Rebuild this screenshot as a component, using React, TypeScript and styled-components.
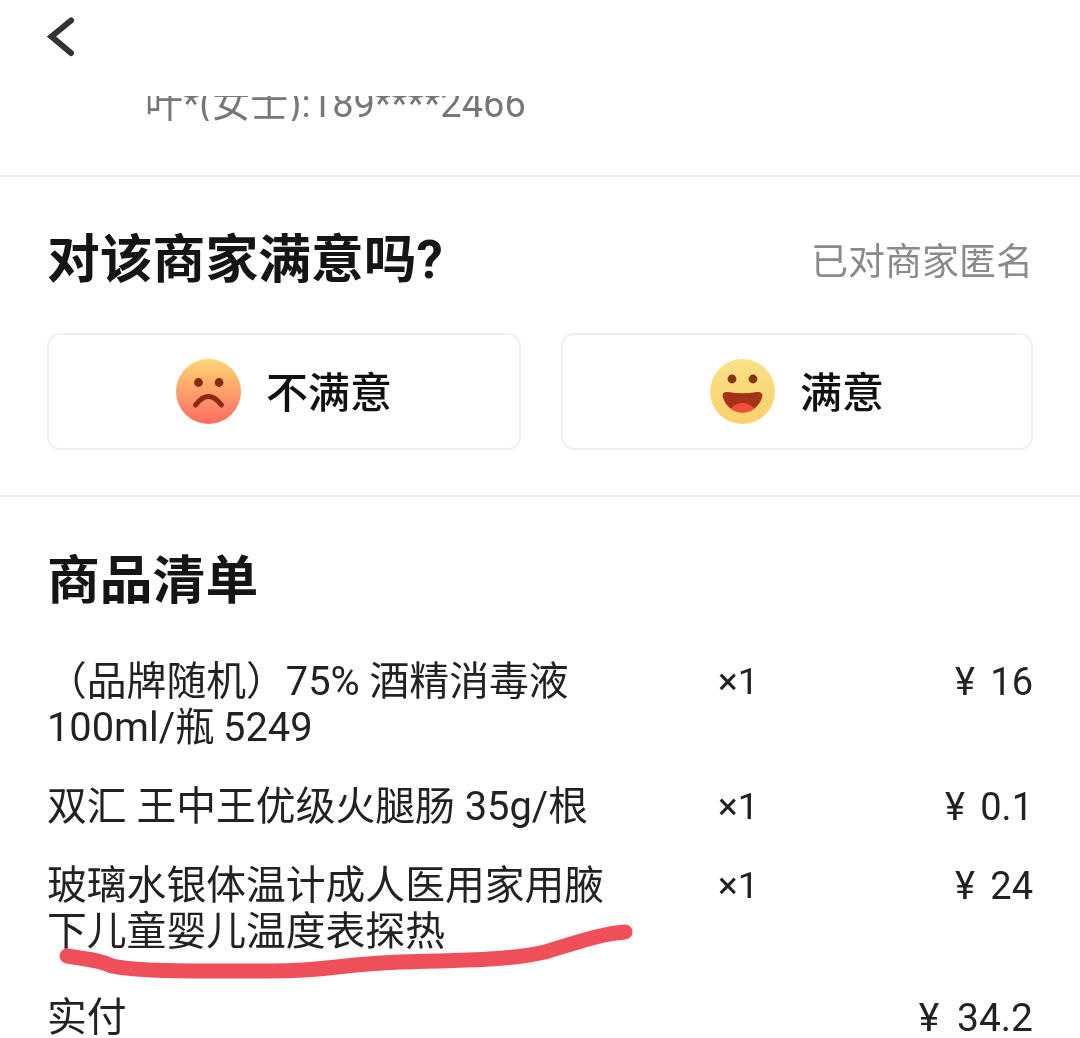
import React from "react";
import styled, { createGlobalStyle } from "styled-components";

const Global = createGlobalStyle`
  html, body { margin: 0; padding: 0; background: #fff; }
  body { font-family: Roboto, "Noto Sans CJK SC", sans-serif; color: #1a1a1a; }
`;

const Page = styled.div`
  position: relative;
  width: 1080px;
  height: 1038px;
  overflow: hidden;
  background: #fff;
  filter: blur(0.35px);
`;

const TopBar = styled.header`
  height: 96px;
  padding: 17px 0 0 46px;
  box-sizing: border-box;
`;

const AddressBlock = styled.section`
  height: 81px;
  padding-left: 145px;
  box-sizing: border-box;
  border-bottom: 2px solid #ececec;
`;

const PhoneClip = styled.div`
  height: 25px;
  display: flex;
  align-items: flex-end;
  overflow: hidden;
`;

const Phone = styled.span`
  flex: none;
  font-size: 38px;
  line-height: 34px;
  color: #777;
  white-space: nowrap;
`;

const RatingSection = styled.section`
  height: 320px;
  padding: 53px 47px 0;
  box-sizing: border-box;
  border-bottom: 2px solid #ececec;
`;

const RatingHead = styled.div`
  display: flex;
  justify-content: space-between;
  align-items: center;
  height: 60px;
`;

const BigTitle = styled.h2`
  margin: 0;
  font-size: 52.8px;
  line-height: 60px;
  font-weight: 700;
  color: #151515;
`;

const Anonymous = styled.span`
  font-size: 37px;
  color: #8a8a8a;
  white-space: nowrap;
  padding-bottom: 3px;
`;

const ChoiceRow = styled.div`
  display: grid;
  grid-template-columns: 474px 472px;
  column-gap: 40px;
  margin-top: 43px;
`;

const Choice = styled.div`
  height: 117px;
  box-sizing: border-box;
  border: 2px solid #eeeff1;
  border-radius: 13px;
  display: flex;
  align-items: center;
  justify-content: center;
  gap: 25px;
  font-size: 42px;
  font-weight: 500;
  color: #111;
`;

const ChoiceLabel = styled.span`
  padding-bottom: 5px;
`;

const ListSection = styled.section`
  padding: 54px 47px 0;
`;

const ListTitle = styled(BigTitle)`
  margin-bottom: 48px;
`;

const ItemRow = styled.div<{ $gap?: number }>`
  display: grid;
  grid-template-columns: 671px 1fr 130px;
  margin-bottom: ${(p) => p.$gap ?? 33}px;
  font-size: 39.8px;
  line-height: 46px;
  color: #222;
`;

const ItemName = styled.div`
  width: 566px;
`;

const Qty = styled.div`
  font-size: 37px;
`;

const Price = styled.div`
  text-align: right;
  font-size: 38px;
  word-spacing: 6px;
  white-space: nowrap;
`;

const TotalRow = styled.div`
  display: flex;
  justify-content: space-between;
  font-size: 39.8px;
  line-height: 46px;
  color: #222;
`;

const TotalPrice = styled.span`
  font-size: 39px;
  word-spacing: 8px;
`;

const Scribble = styled.svg`
  position: absolute;
  left: 0;
  top: 900px;
  pointer-events: none;
`;

const Back = () => (
  <svg width="30" height="42" viewBox="0 0 30 42" fill="none" aria-hidden>
    <path d="M25 3.5 L5.5 19.5 L25 36" stroke="#333" strokeWidth="6" strokeLinecap="round" strokeLinejoin="miter" />
  </svg>
);

const SadFace = () => (
  <svg width="65" height="65" viewBox="0 0 65 65" aria-hidden>
    <defs>
      <linearGradient id="sad" x1="0" y1="0" x2="0" y2="1">
        <stop offset="0" stopColor="#fbd673" />
        <stop offset="1" stopColor="#ff6b63" />
      </linearGradient>
    </defs>
    <circle cx="32.5" cy="32.5" r="32.5" fill="url(#sad)" />
    <circle cx="22.5" cy="23.5" r="4.4" fill="#8c2a10" />
    <circle cx="43" cy="23.5" r="4.4" fill="#8c2a10" />
    <path d="M19.5 46 Q32.5 29 45.5 46" fill="none" stroke="#8c2a10" strokeWidth="5" strokeLinecap="round" />
  </svg>
);

const HappyFace = () => (
  <svg width="65" height="65" viewBox="0 0 65 65" aria-hidden>
    <defs>
      <linearGradient id="happy" x1="0" y1="0" x2="0" y2="1">
        <stop offset="0" stopColor="#f7e285" />
        <stop offset="1" stopColor="#fcd06c" />
      </linearGradient>
      <clipPath id="mouth">
        <path d="M12.5 37 C12.5 33.5 15 32.5 18 33 Q32.5 35.5 47 33 C50 32.5 52.5 33.5 52.5 37 C50 47 42 53.5 32.5 53.5 C23 53.5 15 47 12.5 37 Z" />
      </clipPath>
    </defs>
    <circle cx="32.5" cy="32.5" r="32.5" fill="url(#happy)" />
    <circle cx="22" cy="20" r="4.4" fill="#8a3214" />
    <circle cx="43" cy="20" r="4.4" fill="#8a3214" />
    <g clipPath="url(#mouth)">
      <rect x="10" y="28" width="45" height="28" fill="#a5331a" />
      <ellipse cx="32.5" cy="57" rx="14" ry="13" fill="#ef4f3c" />
    </g>
  </svg>
);

export default function App() {
  return (
    <Page>
      <Global />
      <TopBar>
        <Back />
      </TopBar>
      <AddressBlock>
        <PhoneClip>
          <Phone>叶*(女士):189****2466</Phone>
        </PhoneClip>
      </AddressBlock>
      <RatingSection>
        <RatingHead>
          <BigTitle>对该商家满意吗?</BigTitle>
          <Anonymous>已对商家匿名</Anonymous>
        </RatingHead>
        <ChoiceRow>
          <Choice>
            <SadFace />
            <ChoiceLabel>不满意</ChoiceLabel>
          </Choice>
          <Choice>
            <HappyFace />
            <ChoiceLabel>满意</ChoiceLabel>
          </Choice>
        </ChoiceRow>
      </RatingSection>
      <ListSection>
        <ListTitle>商品清单</ListTitle>
        <ItemRow>
          <ItemName>（品牌随机）75% 酒精消毒液 100ml/瓶{"\u2009"}5249</ItemName>
          <Qty>×1</Qty>
          <Price>¥ 16</Price>
        </ItemRow>
        <ItemRow>
          <ItemName>双汇 王中王优级火腿肠 35g/根</ItemName>
          <Qty>×1</Qty>
          <Price>¥ 0.1</Price>
        </ItemRow>
        <ItemRow $gap={40}>
          <ItemName>玻璃水银体温计成人医用家用腋下儿童婴儿温度表探热</ItemName>
          <Qty>×1</Qty>
          <Price>¥ 24</Price>
        </ItemRow>
        <TotalRow>
          <span>实付</span>
          <TotalPrice>¥ 34.2</TotalPrice>
        </TotalRow>
      </ListSection>
      <Scribble width="660" height="90" viewBox="0 0 660 90" aria-hidden>
        <path
          d="M67 56 C85 59 100 60 112 66 C140 72 200 71 270 71 C330 71 340 64 400 62 C470 60 510 60 545 52 C575 43 600 34 625 32"
          fill="none"
          stroke="#ee4f58"
          strokeWidth="15"
          strokeLinecap="round"
        />
      </Scribble>
    </Page>
  );
}
